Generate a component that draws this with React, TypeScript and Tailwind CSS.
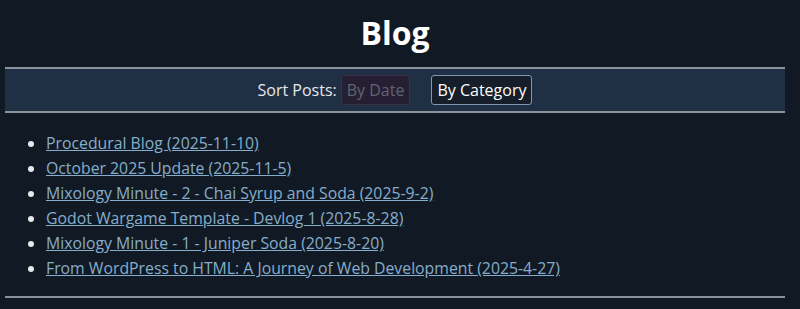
const POSTS = [
  'Procedural Blog (2025-11-10)',
  'October 2025 Update (2025-11-5)',
  'Mixology Minute - 2 - Chai Syrup and Soda (2025-9-2)',
  'Godot Wargame Template - Devlog 1 (2025-8-28)',
  'Mixology Minute - 1 - Juniper Soda (2025-8-20)',
  'From WordPress to HTML: A Journey of Web Development (2025-4-27)',
];

export default function App() {
  return (
    <div className="min-h-[309px] w-full bg-[#111a24] text-[#e6e8ea]" style={{ fontFamily: '"Open Sans", "Noto Sans", sans-serif' }}>
      <div className="ml-[5px] mr-[15px] pt-[10px]">
        <h1 className="h-[45px] text-center text-[32px] font-bold leading-[45px] text-white">Blog</h1>
        <div className="mt-[12px] flex h-[46px] items-center justify-center border-y-2 border-[#8a939b] bg-[#1f2f44] text-[16px]">
          <span className="mr-[4px]">Sort Posts:</span>
          <button className="h-[30px] rounded-[3px] border border-[#3a3148] bg-[#261f33] px-[5px] text-[#5f6472]">By Date</button>
          <button className="ml-[21px] h-[30px] rounded-[3px] border border-[#7d98b3] bg-[#151e29] px-[5px] text-white">By Category</button>
        </div>
        <ul className="mt-[18px] list-disc pl-[41px] text-[15.8px] leading-[25px] marker:text-[#e6e8ea]">
          {POSTS.map(p => (
            <li key={p}>
              <a href="#" className="text-[#86adcb] underline">{p}</a>
            </li>
          ))}
        </ul>
        <div className="mt-[15px] h-[2px] bg-[#8a939b]" />
      </div>
    </div>
  );
}
